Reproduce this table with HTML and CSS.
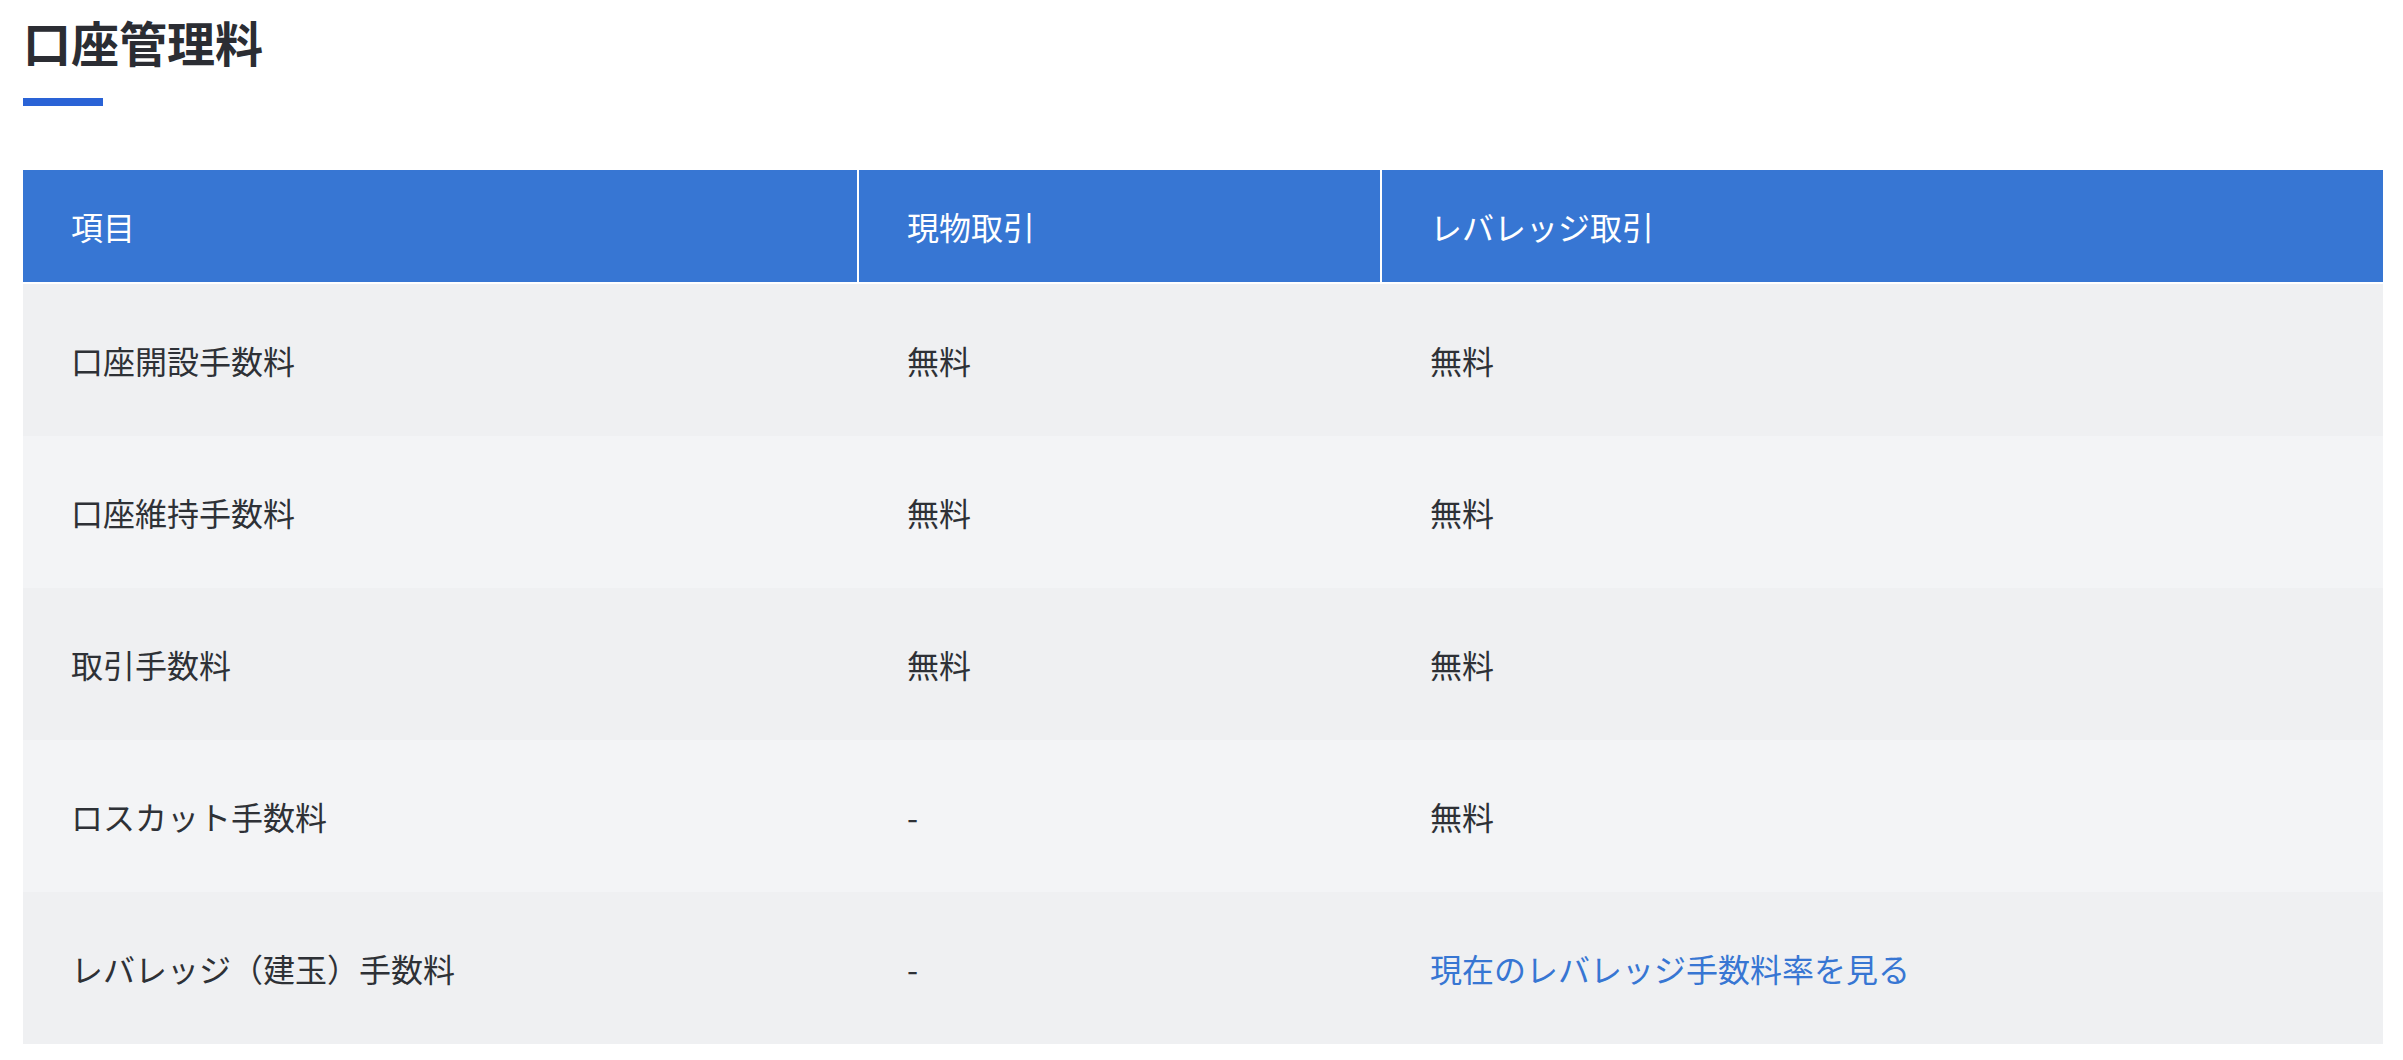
FILE: index.html
```html
<!DOCTYPE html>
<html lang="ja">
<head>
<meta charset="utf-8">
<title>口座管理料</title>
<link rel="stylesheet" href="styles.css">
</head>
<body>
<section class="fees">
  <h1 class="fees-title">口座管理料</h1>
  <div class="fees-bar"></div>
  <table class="fees-table">
    <thead>
      <tr>
        <th class="c1">項目</th>
        <th class="c2">現物取引</th>
        <th class="c3">レバレッジ取引</th>
      </tr>
    </thead>
    <tbody>
      <tr><td>口座開設手数料</td><td>無料</td><td>無料</td></tr>
      <tr><td>口座維持手数料</td><td>無料</td><td>無料</td></tr>
      <tr><td>取引手数料</td><td>無料</td><td>無料</td></tr>
      <tr><td>ロスカット手数料</td><td>-</td><td>無料</td></tr>
      <tr><td>レバレッジ（建玉）手数料</td><td>-</td><td><a class="fees-link" href="#">現在のレバレッジ手数料率を見る</a></td></tr>
    </tbody>
  </table>
</section>
</body>
</html>
```
FILE: styles.css
```css
html, body {
  margin: 0;
  padding: 0;
  background: #ffffff;
}
body {
  font-family: "Noto Sans CJK JP", "Noto Sans", sans-serif;
  color: #2e3136;
}
.fees {
  padding: 17px 20px 0 23px;
}
.fees-title {
  margin: 0;
  font-size: 48px;
  line-height: 48px;
  font-weight: 700;
  color: #2b2d33;
}
.fees-bar {
  width: 80px;
  height: 8px;
  margin-top: 33px;
  background: #2a63d6;
}
.fees-table {
  margin-top: 64px;
  width: 2360px;
  table-layout: fixed;
  border-collapse: separate;
  border-spacing: 0;
  font-size: 32px;
}
.fees-table th,
.fees-table td {
  box-sizing: border-box;
  padding: 0 48px;
  text-align: left;
  vertical-align: middle;
  white-space: nowrap;
}
.fees-table th {
  height: 114px;
  background: #3776d3;
  color: #ffffff;
  font-weight: 400;
  border-bottom: 2px solid #ffffff;
}
.fees-table th + th {
  border-left: 2px solid #ffffff;
}
.fees-table td + td {
  padding-left: 50px;
}
.c1 { width: 834px; }
.c2 { width: 523px; }
.c3 { width: 1003px; }
.fees-table td {
  height: 152px;
  font-weight: 400;
}
.fees-table tbody tr:nth-child(odd) td {
  background: #eff0f2;
}
.fees-table tbody tr:nth-child(even) td {
  background: #f3f4f6;
}
.fees-link {
  color: #3776d3;
  text-decoration: none;
}
```
